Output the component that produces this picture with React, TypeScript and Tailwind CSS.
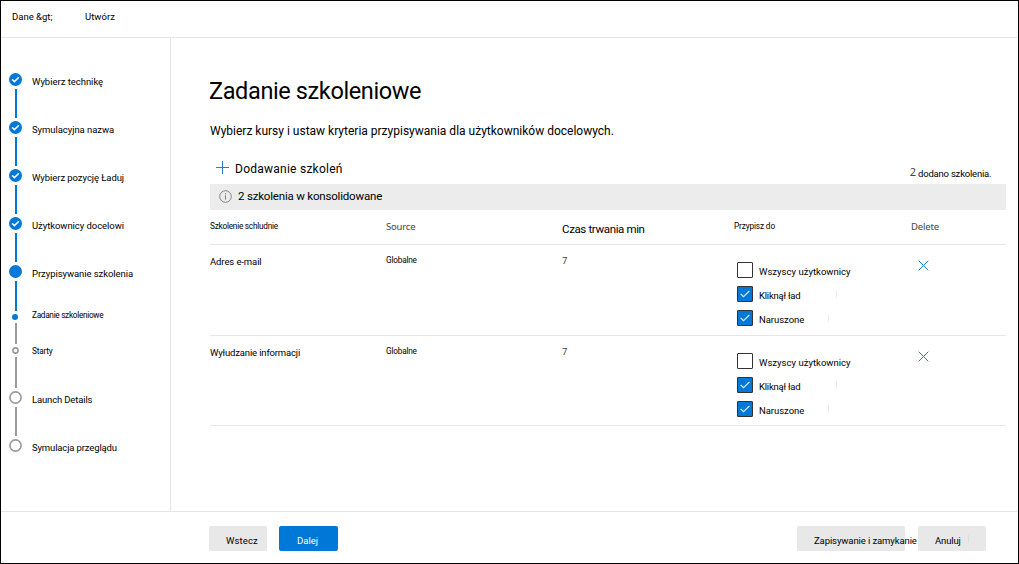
import clsx from "clsx";

const text = {
  sm: "block text-[8.25px] leading-[10px] whitespace-nowrap",
  md: "block text-[9.5px] leading-[12px] whitespace-nowrap",
  lg: "block text-[12px] leading-[14px] whitespace-nowrap",
  lgTight: "block text-[11.5px] leading-[14px] whitespace-nowrap",
  native: "block font-['Noto_Sans',sans-serif] text-[9.5px] leading-[12px] whitespace-nowrap text-[#444]",
};

type StepProps = {
  label: string;
  kind: "done" | "current" | "sub" | "subOpen" | "open";
  labelClass: string;
  line?: string;
};

function Marker({ kind }: { kind: StepProps["kind"] }) {
  if (kind === "done")
    return (
      <svg width="13" height="13" viewBox="0 0 13 13" className="block">
        <circle cx="6.5" cy="6.5" r="6.5" fill="#0078d7" />
        <path d="M3.1 6.3 5.4 8.6 9.9 4.3" fill="none" stroke="#fff" strokeWidth="1.5" />
      </svg>
    );
  if (kind === "current") return <div className="size-[13px] rounded-full bg-[#0078d7]" />;
  if (kind === "sub") return <div className="ml-[3px] size-[6px] rounded-full bg-[#0078d7]" />;
  if (kind === "subOpen")
    return (
      <svg width="7" height="7" viewBox="0 0 7 7" className="ml-[3px] block">
        <circle cx="3.5" cy="3.5" r="2.6" fill="none" stroke="#999" strokeWidth="1.6" />
      </svg>
    );
  return (
    <svg width="13" height="13" viewBox="0 0 13 13" className="block">
      <circle cx="6.5" cy="6.5" r="5.6" fill="none" stroke="#999" strokeWidth="1.6" />
    </svg>
  );
}

function Step({ label, kind, labelClass, line }: StepProps) {
  return (
    <li className="flex gap-[10px]">
      <div className="w-[13px] shrink-0">
        <Marker kind={kind} />
        {line && <div className={clsx("my-[3px] ml-[6px] w-[2px]", line)} />}
      </div>
      <span className={labelClass}>{label}</span>
    </li>
  );
}

const steps: StepProps[] = [
  { label: "Wybierz technikę", kind: "done", labelClass: clsx(text.md, "mt-[3px] tracking-[-0.03px]"), line: "h-[29px] bg-[#0078d7]" },
  { label: "Symulacyjna nazwa", kind: "done", labelClass: clsx(text.md, "mt-[3px] tracking-[-0.06px]"), line: "h-[29px] bg-[#0078d7]" },
  { label: "Wybierz pozycję Ładuj", kind: "done", labelClass: clsx(text.md, "mt-[3px] tracking-[-0.07px]"), line: "h-[29px] bg-[#0078d7]" },
  { label: "Użytkownicy docelowi", kind: "done", labelClass: clsx(text.md, "mt-[3px] tracking-[-0.06px]"), line: "h-[29px] bg-[#0078d7]" },
  { label: "Przypisywanie szkolenia", kind: "current", labelClass: clsx(text.md, "mt-[3px] tracking-[-0.07px]"), line: "h-[30px] bg-[#0078d7]" },
  { label: "Zadanie szkoleniowe", kind: "sub", labelClass: clsx(text.sm, "-mt-[4px] tracking-[-0.3px]"), line: "h-[21px] bg-[#999]" },
  { label: "Starty", kind: "subOpen", labelClass: clsx(text.sm, "-mt-px tracking-[-0.2px]"), line: "h-[31px] bg-[#999]" },
  { label: "Launch Details", kind: "open", labelClass: clsx(text.md, "mt-[3px] tracking-[-0.15px]"), line: "h-[29px] bg-[#999]" },
  { label: "Symulacja przeglądu", kind: "open", labelClass: clsx(text.md, "mt-[3px] tracking-[-0.14px]") },
];

function Check({ label, checked, labelClass }: { label: string; checked?: boolean; labelClass: string }) {
  return (
    <label className="flex h-[24px] gap-[6px]">
      <span className={clsx("block size-[16px] rounded-[1px] border border-[#333]", checked ? "bg-[#0078d7]" : "bg-white")}>
        {checked && (
          <svg width="14" height="14" viewBox="0 0 14 14" className="block">
            <path d="M2.6 6.8 5.5 9.7 11.4 4" fill="none" stroke="#d5eafa" strokeWidth="1.2" />
          </svg>
        )}
      </span>
      <span className={clsx(text.md, "mt-[4px]", labelClass)}>{label}</span>
    </label>
  );
}

function Row({ name, nameClass, className }: { name: string; nameClass: string; className: string }) {
  return (
    <div className={clsx("grid grid-cols-[176px_176px_175px_174px_95px] border-b border-[#e8e8e8]", className)}>
      <span className={clsx(text.md, "mt-[11px]", nameClass)}>{name}</span>
      <span className={clsx(text.sm, "mt-[10px] tracking-[-0.2px]")}>Globalne</span>
      <span className={clsx(text.native, "mt-[10px]")}>7</span>
      <div className="mt-[17px]">
        <Check label="Wszyscy użytkownicy" labelClass="tracking-[0.02px]" />
        <div className="flex">
          <Check label="Kliknął ład" checked labelClass="w-[77px] tracking-[-0.22px]" />
          <span className="mt-[4px] h-[8px] w-px bg-[#eee]" />
        </div>
        <div className="flex">
          <Check label="Naruszone" checked labelClass="w-[69px] tracking-[-0.05px]" />
          <span className="mt-[4px] h-[8px] w-px bg-[#eee]" />
        </div>
      </div>
      <svg width="11" height="11" viewBox="0 0 11 11" className="mt-[15px] ml-[7px]">
        <path d="M.7.7 10.3 10.3M10.3.7.7 10.3" fill="none" stroke="#1a7fd0" strokeWidth="1" />
      </svg>
    </div>
  );
}

export default function App() {
  return (
    <div className="flex h-[564px] w-[1019px] flex-col border border-black bg-white font-['Roboto',sans-serif] text-black">
      <header className="flex h-[37px] shrink-0 border-b border-[#e5e5e5] pt-[10px] pl-[11px]">
        <span className={clsx(text.md, "w-[73px]")}>Dane &amp;gt;</span>
        <span className={clsx(text.md, "tracking-[0.03px]")}>Utwórz</span>
      </header>

      <div className="flex min-h-0 flex-1">
        <nav className="w-[170px] shrink-0 border-r border-[#e5e5e5] pt-[35px] pl-[8px]">
          <ul>
            {steps.map((s) => (
              <Step key={s.label} {...s} />
            ))}
          </ul>
        </nav>

        <main className="flex-1 pr-[12px] pl-[39px]">
          <h1 className="mt-[39px] -ml-px text-[23.5px] leading-[28px] tracking-[-0.38px] whitespace-nowrap">Zadanie szkoleniowe</h1>
          <p className={clsx(text.lg, "mt-[19px]")}>
            Wybierz kursy i ustaw kryteria przypisywania dla użytkowników docelowych.
          </p>
          <div className="mt-[23px] flex h-[23px]">
            <svg width="13" height="13" viewBox="0 0 13 13" className="ml-[6px]">
              <path d="M6.5 0V13M0 6.5H13" stroke="#2b7fbf" strokeWidth="1" />
            </svg>
            <span className={clsx(text.lg, "mt-px ml-[6px] tracking-[0.25px]")}>Dodawanie szkoleń</span>
            <span className="mt-[4px] ml-auto block font-['Noto_Sans',sans-serif] text-[11px] leading-[14px] text-[#444]">2</span>
            <span className={clsx(text.md, "mt-[7px] ml-[2px] w-[88px] tracking-[-0.2px]")}>dodano szkolenia.</span>
          </div>

          <div className="flex h-[26px] bg-[#ececec]">
            <svg width="13" height="13" viewBox="0 0 13 13" className="mt-[6px] ml-[9px]">
              <circle cx="6.5" cy="6.5" r="5.8" fill="none" stroke="#777" strokeWidth="0.9" />
              <path d="M6.5 5.4V9.6M6.5 3.2V4.4" stroke="#777" strokeWidth="1" />
            </svg>
            <span className={clsx(text.lgTight, "mt-[5px] ml-[6px] tracking-[-0.19px]")}>2 szkolenia w konsolidowane</span>
          </div>

          <div className="grid h-[35px] grid-cols-[176px_176px_172px_177px_95px] border-b border-[#e5e5e5]">
            <span className={clsx(text.sm, "mt-[11px] tracking-[-0.24px]")}>Szkolenie schludnie</span>
            <span className={clsx(text.native, "mt-[11px] tracking-[-0.2px]")}>Source</span>
            <span className={clsx(text.lgTight, "mt-[12px] tracking-[-0.36px]")}>Czas trwania min</span>
            <span className={clsx(text.sm, "mt-[11px] tracking-[-0.13px]")}>Przypisz do</span>
            <span className={clsx(text.native, "mt-[11px] tracking-[-0.15px]")}>Delete</span>
          </div>
          <Row name="Adres e-mail" nameClass="tracking-[-0.1px]" className="h-[91px]" />
          <Row name="Wyłudzanie informacji" nameClass="tracking-[-0.16px]" className="h-[90px]" />
        </main>
      </div>

      <footer className="flex h-[52px] shrink-0 border-t border-[#e5e5e5] pt-[14px] pl-[208px]">
        <button className="h-[25px] w-[58px] rounded-[2px] bg-[#e8e8e8] pt-[5px] pl-[17px] text-left">
          <span className={clsx(text.md, "tracking-[0.1px]")}>Wstecz</span>
        </button>
        <button className="ml-[12px] h-[25px] w-[59px] rounded-[2px] bg-[#0078d7] pt-[5px] pl-[18px] text-left text-white">
          <span className={text.md}>Dalej</span>
        </button>
        <button className="mr-[13px] ml-auto h-[25px] w-[108px] rounded-[2px] bg-[#e8e8e8] pt-[5px] pl-[17px] text-left">
          <span className={clsx(text.md, "tracking-[-0.1px]")}>Zapisywanie i zamykanie</span>
        </button>
        <button className="mr-[32px] flex h-[25px] w-[68px] items-center rounded-[2px] bg-[#e8e8e8] pt-[5px] pl-[17px] text-left">
          <span className={clsx(text.md, "w-[33px] tracking-[-0.13px]")}>Anuluj</span>
          <span className="mb-[4px] h-[8px] w-px bg-[#dedede]" />
        </button>
      </footer>
    </div>
  );
}
